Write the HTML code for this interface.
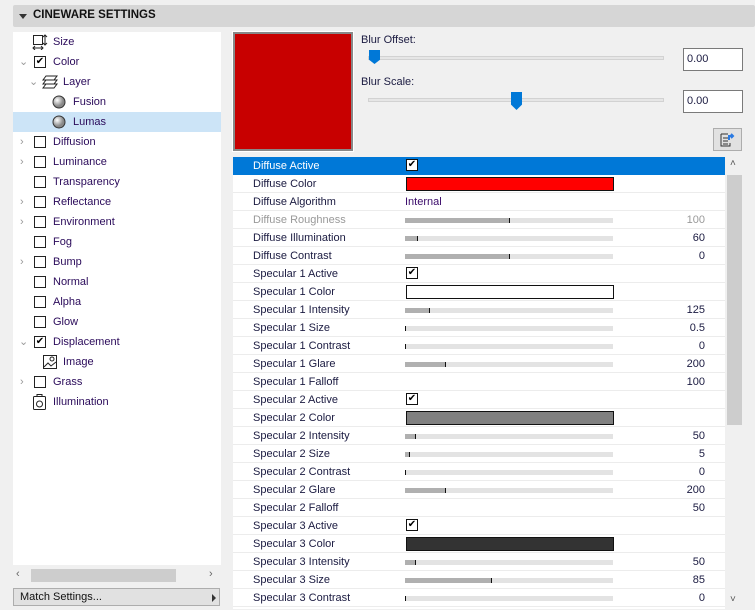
<!DOCTYPE html>
<html><head><style>
*{margin:0;padding:0;box-sizing:border-box}
body{width:755px;height:610px;background:#f0f0f0;font-family:"Liberation Sans",sans-serif;font-size:11px;color:#1a1a40;position:relative;overflow:hidden}
.a{position:absolute}
.hdr{left:13px;top:5px;width:742px;height:22px;background:#d6d6d6;border-radius:2px}
.hdr b{position:absolute;left:20px;top:4px;font-size:11.5px;color:#111}
.tri{position:absolute;left:6px;top:9px;border-left:4px solid transparent;border-right:4px solid transparent;border-top:5px solid #333}
.tree{left:13px;top:32px;width:208px;height:533px;background:#fff}
.ti{position:absolute;height:20px;line-height:20px;width:208px;color:#2a0a5a}
.cb{position:absolute;width:12px;height:12px;border:1px solid #222;background:#fff;top:4px}
.chev{position:absolute;color:#999;font-size:11px;top:0}
.row{position:absolute;left:233px;width:492px;height:18px;background:#fff;border-bottom:1px solid #ececec}
.row .l{position:absolute;left:20px;top:3px;color:#1a1a40}
.row .n{position:absolute;right:20px;top:3px;color:#1a1a40}
.tr{position:absolute;left:172px;top:7px;width:208px;height:5px;background:#e3e3e3}
.fl{position:absolute;left:0;top:0;height:5px;background:#b0b0b0;border-right:1px solid #111}
.bx{position:absolute;left:173px;top:2px;width:208px;height:14px;border:1px solid #111}
.ck{position:absolute;left:173px;top:2px;width:12px;height:12px;border:1px solid #111;background:#fff;font-size:10px;line-height:10px;text-align:center;color:#000}
</style></head><body>
<div class="a hdr"><div class="tri"></div><b>CINEWARE SETTINGS</b></div>
<div class="a tree">
 <div class="ti" style="top:0"><svg class="a" style="left:19px;top:2px" width="16" height="16"><rect x="1.5" y="1.5" width="9" height="9" fill="none" stroke="#222"/><path d="M13 1v10M11 3l2-2 2 2M11 9l2 2 2-2M1 14h10M3 12l-2 2 2 2M9 12l2 2-2 2" stroke="#222" fill="none"/></svg><span class="a" style="left:40px">Size</span></div>
 <div class="ti" style="top:20px"><span class="chev" style="left:6px">&#8964;</span><div class="cb" style="left:21px;font-size:10px;line-height:9px;text-align:center;color:#000">✔</div><span class="a" style="left:40px">Color</span></div>
 <div class="ti" style="top:40px"><span class="chev" style="left:16px">&#8964;</span><svg class="a" style="left:29px;top:3px" width="16" height="14"><path d="M4 1h11l-3 4H1zM4 5h11l-3 4H1zM4 9h11l-3 4H1z" fill="#fff" stroke="#222"/></svg><span class="a" style="left:50px">Layer</span></div>
 <div class="ti" style="top:60px"><svg class="a" style="left:39px;top:3px" width="14" height="14"><defs><radialGradient id="g" cx=".35" cy=".35"><stop offset="0" stop-color="#fff"/><stop offset="1" stop-color="#888"/></radialGradient></defs><circle cx="7" cy="7" r="6" fill="url(#g)" stroke="#333"/></svg><span class="a" style="left:60px">Fusion</span></div>
 <div class="ti" style="top:80px;background:#cce4f7"><svg class="a" style="left:39px;top:3px" width="14" height="14"><circle cx="7" cy="7" r="6" fill="url(#g)" stroke="#333"/></svg><span class="a" style="left:60px">Lumas</span></div>
 <div class="ti" style="top:100px"><span class="chev" style="left:7px">›</span><div class="cb" style="left:21px"></div><span class="a" style="left:40px">Diffusion</span></div>
 <div class="ti" style="top:120px"><span class="chev" style="left:7px">›</span><div class="cb" style="left:21px"></div><span class="a" style="left:40px">Luminance</span></div>
 <div class="ti" style="top:140px"><div class="cb" style="left:21px"></div><span class="a" style="left:40px">Transparency</span></div>
 <div class="ti" style="top:160px"><span class="chev" style="left:7px">›</span><div class="cb" style="left:21px"></div><span class="a" style="left:40px">Reflectance</span></div>
 <div class="ti" style="top:180px"><span class="chev" style="left:7px">›</span><div class="cb" style="left:21px"></div><span class="a" style="left:40px">Environment</span></div>
 <div class="ti" style="top:200px"><div class="cb" style="left:21px"></div><span class="a" style="left:40px">Fog</span></div>
 <div class="ti" style="top:220px"><span class="chev" style="left:7px">›</span><div class="cb" style="left:21px"></div><span class="a" style="left:40px">Bump</span></div>
 <div class="ti" style="top:240px"><div class="cb" style="left:21px"></div><span class="a" style="left:40px">Normal</span></div>
 <div class="ti" style="top:260px"><div class="cb" style="left:21px"></div><span class="a" style="left:40px">Alpha</span></div>
 <div class="ti" style="top:280px"><div class="cb" style="left:21px"></div><span class="a" style="left:40px">Glow</span></div>
 <div class="ti" style="top:300px"><span class="chev" style="left:6px">&#8964;</span><div class="cb" style="left:21px;font-size:10px;line-height:9px;text-align:center;color:#000">✔</div><span class="a" style="left:40px">Displacement</span></div>
 <div class="ti" style="top:320px"><svg class="a" style="left:30px;top:3px" width="14" height="14"><rect x=".5" y=".5" width="13" height="13" fill="#fff" stroke="#222"/><path d="M1 12l4-4 3 3 5-4" fill="none" stroke="#222"/><circle cx="9" cy="4" r="2" fill="none" stroke="#222"/></svg><span class="a" style="left:50px">Image</span></div>
 <div class="ti" style="top:340px"><span class="chev" style="left:7px">›</span><div class="cb" style="left:21px"></div><span class="a" style="left:40px">Grass</span></div>
 <div class="ti" style="top:360px"><svg class="a" style="left:20px;top:2px" width="14" height="16"><rect x=".5" y="2.5" width="12" height="13" rx="1" fill="#fff" stroke="#222"/><path d="M4 2.5V.5h5v2" fill="none" stroke="#222"/><circle cx="6.5" cy="10" r="3" fill="none" stroke="#222"/></svg><span class="a" style="left:40px">Illumination</span></div>
</div>
<div class="a" style="left:13px;top:568px;width:208px;height:16px;background:#f0f0f0"><span class="a" style="left:3px;top:0;color:#666">‹</span><div class="a" style="left:18px;top:1px;width:145px;height:13px;background:#cdcdcd"></div><span class="a" style="left:196px;top:0;color:#666">›</span></div>
<div class="a" style="left:13px;top:588px;width:207px;height:18px;background:#e1e1e1;border:1px solid #adadad"><span class="a" style="left:6px;top:2px;color:#111">Match Settings...</span><div class="a" style="left:198px;top:5px;border-top:4px solid transparent;border-bottom:4px solid transparent;border-left:4px solid #333"></div></div>
<div class="a" style="left:233px;top:32px;width:120px;height:119px;background:#c80000;border:2px solid #888;outline:1px solid #fff"></div>
<span class="a" style="left:361px;top:34px;color:#1a1a40">Blur Offset:</span>
<div class="a" style="left:368px;top:56px;width:296px;height:4px;background:#e6e6e6;border:1px solid #d2d2d2"></div>
<div class="a" style="left:369px;top:50px;width:11px;height:14px;background:#0078d7;clip-path:polygon(0 0,100% 0,100% 70%,50% 100%,0 70%)"></div>
<div class="a" style="left:683px;top:48px;width:60px;height:23px;background:#fff;border:1px solid #7a7a7a;padding:4px 3px;color:#1a1a40">0.00</div>
<span class="a" style="left:361px;top:76px;color:#1a1a40">Blur Scale:</span>
<div class="a" style="left:368px;top:98px;width:296px;height:4px;background:#e6e6e6;border:1px solid #d2d2d2"></div>
<div class="a" style="left:511px;top:92px;width:11px;height:18px;background:#0078d7;clip-path:polygon(0 0,100% 0,100% 70%,50% 100%,0 70%)"></div>
<div class="a" style="left:683px;top:90px;width:60px;height:23px;background:#fff;border:1px solid #7a7a7a;padding:4px 3px;color:#1a1a40">0.00</div>
<div class="a" style="left:713px;top:128px;width:29px;height:23px;background:#e1e1e1;border:1px solid #adadad"><svg class="a" style="left:6px;top:3px" width="16" height="16"><path d="M1 2h7M1 2v12h9v-3M3 6h5M3 9h5M3 12h5" fill="none" stroke="#333"/><path d="M9 8V4h4M11 2l2 2-2 2" fill="none" stroke="#2a7ae2" stroke-width="2"/></svg></div>

<div class="a" style="left:233px;top:157px;width:492px;height:452px;background:#fff"></div>
<div class="row" style="top:157px;background:#0078d7;border:none"><span class="l" style="color:#fff">Diffuse Active</span><div class="ck">✔</div></div>
<div class="row" style="top:175px"><span class="l">Diffuse Color</span><div class="bx" style="background:#f00"></div></div>
<div class="row" style="top:193px"><span class="l">Diffuse Algorithm</span><span class="a" style="left:172px;top:3px;color:#3a0a6a">Internal</span></div>
<div class="row" style="top:211px"><span class="l" style="color:#999">Diffuse Roughness</span><div class="tr"><div class="fl" style="width:105px"></div></div><span class="n" style="color:#999">100</span></div>
<div class="row" style="top:229px"><span class="l">Diffuse Illumination</span><div class="tr"><div class="fl" style="width:13px"></div></div><span class="n">60</span></div>
<div class="row" style="top:247px"><span class="l">Diffuse Contrast</span><div class="tr"><div class="fl" style="width:105px"></div></div><span class="n">0</span></div>
<div class="row" style="top:265px"><span class="l">Specular 1 Active</span><div class="ck">✔</div></div>
<div class="row" style="top:283px"><span class="l">Specular 1 Color</span><div class="bx" style="background:#fff"></div></div>
<div class="row" style="top:301px"><span class="l">Specular 1 Intensity</span><div class="tr"><div class="fl" style="width:25px"></div></div><span class="n">125</span></div>
<div class="row" style="top:319px"><span class="l">Specular 1 Size</span><div class="tr"><div class="fl" style="width:1px"></div></div><span class="n">0.5</span></div>
<div class="row" style="top:337px"><span class="l">Specular 1 Contrast</span><div class="tr"><div class="fl" style="width:1px"></div></div><span class="n">0</span></div>
<div class="row" style="top:355px"><span class="l">Specular 1 Glare</span><div class="tr"><div class="fl" style="width:41px"></div></div><span class="n">200</span></div>
<div class="row" style="top:373px"><span class="l">Specular 1 Falloff</span><span class="n">100</span></div>
<div class="row" style="top:391px"><span class="l">Specular 2 Active</span><div class="ck">✔</div></div>
<div class="row" style="top:409px"><span class="l">Specular 2 Color</span><div class="bx" style="background:#808080"></div></div>
<div class="row" style="top:427px"><span class="l">Specular 2 Intensity</span><div class="tr"><div class="fl" style="width:11px"></div></div><span class="n">50</span></div>
<div class="row" style="top:445px"><span class="l">Specular 2 Size</span><div class="tr"><div class="fl" style="width:5px"></div></div><span class="n">5</span></div>
<div class="row" style="top:463px"><span class="l">Specular 2 Contrast</span><div class="tr"><div class="fl" style="width:1px"></div></div><span class="n">0</span></div>
<div class="row" style="top:481px"><span class="l">Specular 2 Glare</span><div class="tr"><div class="fl" style="width:41px"></div></div><span class="n">200</span></div>
<div class="row" style="top:499px"><span class="l">Specular 2 Falloff</span><span class="n">50</span></div>
<div class="row" style="top:517px"><span class="l">Specular 3 Active</span><div class="ck">✔</div></div>
<div class="row" style="top:535px"><span class="l">Specular 3 Color</span><div class="bx" style="background:#333"></div></div>
<div class="row" style="top:553px"><span class="l">Specular 3 Intensity</span><div class="tr"><div class="fl" style="width:11px"></div></div><span class="n">50</span></div>
<div class="row" style="top:571px"><span class="l">Specular 3 Size</span><div class="tr"><div class="fl" style="width:87px"></div></div><span class="n">85</span></div>
<div class="row" style="top:589px"><span class="l">Specular 3 Contrast</span><div class="tr"><div class="fl" style="width:1px"></div></div><span class="n">0</span></div>
<div class="a" style="left:725px;top:157px;width:18px;height:452px;background:#f0f0f0"></div>
<span class="a" style="left:730px;top:158px;color:#555;font-size:10px">&#708;</span>
<div class="a" style="left:727px;top:175px;width:15px;height:250px;background:#cdcdcd"></div>
<span class="a" style="left:730px;top:594px;color:#555;font-size:10px">&#709;</span>
</body></html>
